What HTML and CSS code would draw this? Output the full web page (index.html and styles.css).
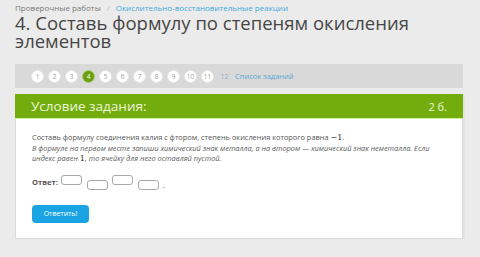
FILE: index.html
```html
<!DOCTYPE html>
<html lang="ru">
<head>
<meta charset="utf-8">
<link rel="stylesheet" href="styles.css">
</head>
<body>
<div class="page">
  <nav class="crumbs">
    <span class="crumb">Проверочные работы</span>
    <span class="sep">/</span>
    <a class="crumb-link">Окислительно-восстановительные реакции</a>
  </nav>
  <h1 class="title">4. Составь формулу по степеням окисления элементов</h1>
  <div class="pager">
    <span class="num">1</span>
    <span class="num">2</span>
    <span class="num">3</span>
    <span class="num current">4</span>
    <span class="num">5</span>
    <span class="num">6</span>
    <span class="num">7</span>
    <span class="num">8</span>
    <span class="num">9</span>
    <span class="num">10</span>
    <span class="num">11</span>
    <span class="num plain">12</span>
    <a class="list-link">Список заданий</a>
  </div>
  <section class="task">
    <header class="task-head">
      <span class="task-title">Условие задания:</span>
      <span class="task-score">2 б.</span>
    </header>
    <div class="task-body">
      <p class="text">Составь формулу соединения калия с фтором, степень окисления которого равна <span class="math">−1</span>.</p>
      <p class="text note">В формуле на первом месте запиши химический знак металла, а на втором — химический знак неметалла. Если индекс равен <span class="math">1</span>, то ячейку для него оставляй пустой.</p>
      <div class="answer">
        <span class="answer-label">Ответ:</span>
        <span class="box"></span>
        <span class="box sub"></span>
        <span class="box"></span>
        <span class="box sub"></span>
        <span class="dot">.</span>
      </div>
      <button class="submit">Ответить!</button>
    </div>
  </section>
</div>
</body>
</html>
```

FILE: styles.css
```css
html, body {
  margin: 0;
  padding: 0;
  background: #ebebeb;
  font-family: "Open Sans", "Noto Sans", sans-serif;
}
.page {
  padding: 2px 17px 0 15px;
}
.crumbs {
  display: flex;
  align-items: baseline;
  gap: 6px;
  font-size: 8px;
  line-height: 11px;
  color: #7a7a7a;
}
.sep {
  color: #bbb;
}
.crumb-link {
  color: #3fa9dc;
}
.title {
  margin: 1px 0 0;
  font-size: 18.5px;
  font-weight: 400;
  line-height: 18px;
  color: #464646;
}
.pager {
  margin-top: 14px;
  height: 24px;
  background: #d9d9d9;
  display: flex;
  align-items: center;
  gap: 4px;
  padding-left: 16px;
}
.num {
  width: 13px;
  height: 13px;
  box-sizing: border-box;
  border-radius: 50%;
  background: #fff;
  border: 1px solid #e6e6e6;
  color: #a0a0a0;
  font-size: 6.5px;
  display: flex;
  align-items: center;
  justify-content: center;
}
.num.current {
  background: #6c9e12;
  border-color: #a9cf6a;
  color: #fff;
}
.num.plain {
  background: transparent;
  border-color: transparent;
  color: #8fb0c8;
  font-size: 7px;
}
.list-link {
  color: #5aa8d3;
  font-size: 7.5px;
}
.task {
  margin-top: 6px;
  background: #fff;
  border: 1px solid #dcdcdc;
  box-shadow: 2px 1px 0 #e2e2e2;
}
.task-head {
  background: #72ac0d;
  height: 24px;
  margin: -1px -1px 0;
  display: flex;
  align-items: center;
  justify-content: space-between;
  padding: 0 16px;
  color: #eef7d9;
  border-bottom: 1px solid #d4ecac;
}
.task-title {
  font-size: 13.5px;
}
.task-score {
  font-size: 11px;
}
.task-body {
  padding: 13px 16px 15px;
}
.text {
  margin: 0;
  font-size: 7.4px;
  line-height: 10.5px;
  color: #555;
}
.note {
  font-style: italic;
  color: #5c5c5c;
}
.math {
  font-family: "DejaVu Serif", "Liberation Serif", serif;
  font-style: normal;
  font-size: 8.2px;
  line-height: 1;
  color: #333;
}
.answer {
  margin-top: 11px;
  display: flex;
  align-items: flex-start;
  gap: 4.5px;
  height: 17px;
}
.answer-label {
  font-size: 7.6px;
  font-weight: 700;
  color: #555;
  line-height: 10px;
  margin-top: 2px;
  margin-right: -1px;
}
.box {
  width: 21px;
  height: 10px;
  box-sizing: border-box;
  border: 1px solid #a8a8a8;
  border-radius: 3px;
  background: #fff;
}
.box.sub {
  margin-top: 5.5px;
}
.dot {
  font-size: 8px;
  color: #555;
  line-height: 10px;
  margin-top: 5px;
  margin-left: -1px;
}
.submit {
  display: block;
  margin-top: 13px;
  width: 57px;
  height: 18px;
  border: none;
  border-radius: 4px;
  background: #1ba4e4;
  color: #fff;
  font-family: "Open Sans", "Noto Sans", sans-serif;
  font-size: 7px;
  padding: 0;
}
```
